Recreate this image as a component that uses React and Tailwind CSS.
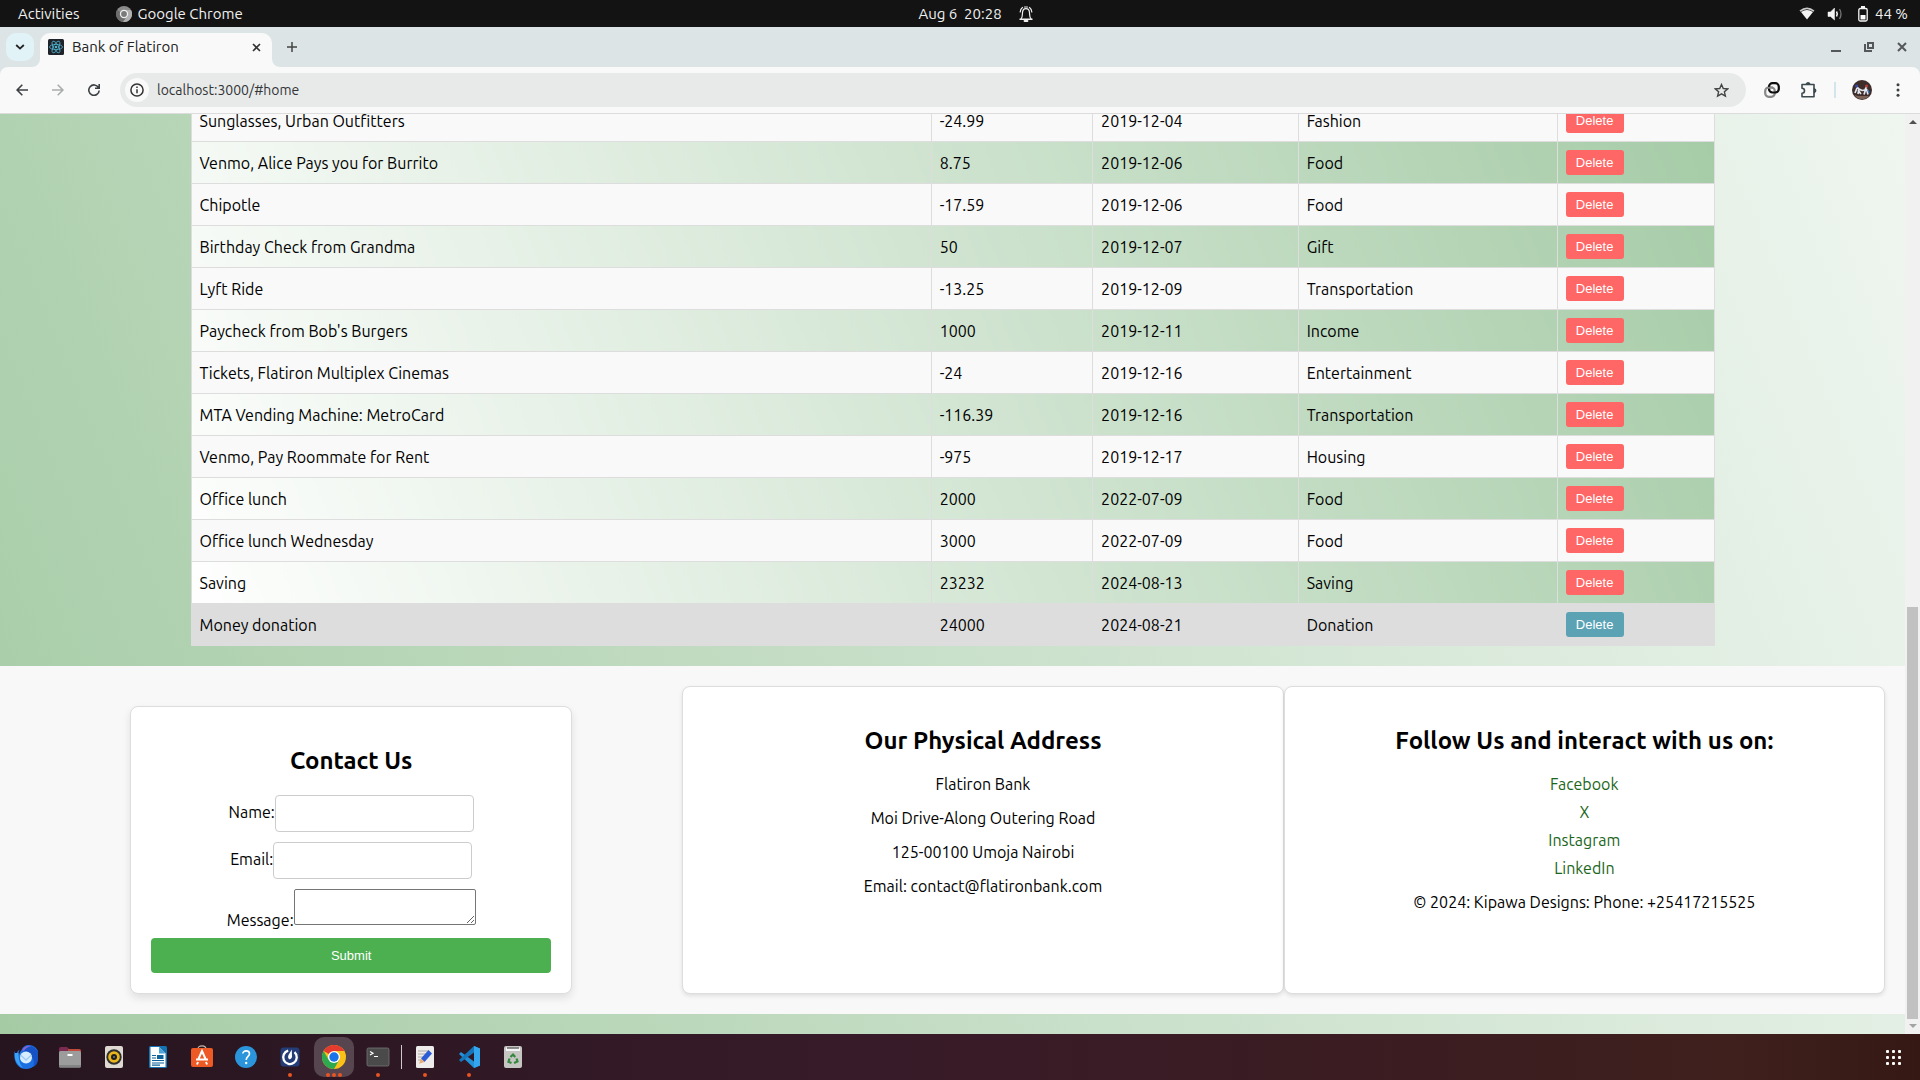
import React from "react";

const transactions = [
  ["Sunglasses, Urban Outfitters", "-24.99", "2019-12-04", "Fashion"],
  ["Venmo, Alice Pays you for Burrito", "8.75", "2019-12-06", "Food"],
  ["Chipotle", "-17.59", "2019-12-06", "Food"],
  ["Birthday Check from Grandma", "50", "2019-12-07", "Gift"],
  ["Lyft Ride", "-13.25", "2019-12-09", "Transportation"],
  ["Paycheck from Bob's Burgers", "1000", "2019-12-11", "Income"],
  ["Tickets, Flatiron Multiplex Cinemas", "-24", "2019-12-16", "Entertainment"],
  ["MTA Vending Machine: MetroCard", "-116.39", "2019-12-16", "Transportation"],
  ["Venmo, Pay Roommate for Rent", "-975", "2019-12-17", "Housing"],
  ["Office lunch", "2000", "2022-07-09", "Food"],
  ["Office lunch Wednesday", "3000", "2022-07-09", "Food"],
  ["Saving", "23232", "2024-08-13", "Saving"],
  ["Money donation", "24000", "2024-08-21", "Donation"],
];

function SystemBar() {
  return (
    <header className="grid h-[27px] shrink-0 grid-cols-3 items-center bg-[#131313] text-[15px] leading-5 text-[#f0f0f0]">
      <div className="flex items-center pl-[18px]">
        <button>Activities</button>
        <button className="ml-9 flex items-center gap-1.5">
          <svg width="16" height="16" viewBox="0 0 16 16">
            <circle cx="8" cy="8" r="8" fill="#8b8b8b" />
            <path d="M8 8 L1.1 4 A8 8 0 0 0 7 15.9 L11 10 Z" fill="#6d6d6d" />
            <path d="M8 4 H15 A8 8 0 0 1 7 15.9 L11.5 10 Z" fill="#b0b0b0" />
            <circle cx="8" cy="8" r="4.2" fill="#f0f0f0" />
            <circle cx="8" cy="8" r="2.9" fill="#7a7a7a" />
          </svg>
          Google Chrome
        </button>
      </div>
      <div className="flex items-center justify-center gap-4 pl-8">
        <button className="whitespace-pre">Aug 6  20:28</button>
        <svg width="16" height="18" viewBox="0 0 16 18" fill="none" stroke="#f0f0f0" strokeWidth="1.2" strokeLinecap="round">
          <path d="M3 14 C4.600 12.500 4.300 10 4.500 7.500 C4.700 5 6 3.600 8 3.600 S11.300 5 11.500 7.500 C11.700 10 11.400 12.500 13 14" />
          <path d="M2 14.300 H14" strokeWidth="1.400" />
          <path d="M6.500 16 H9.500" strokeWidth="1.800" />
          <path d="M4.500 2.500 C3 3.500 2.300 5 2.200 7 M11.500 2.500 C13 3.500 13.700 5 13.800 7" />
          <path d="M6.500 2 H9.500" />
        </svg>
      </div>
      <div className="flex items-center justify-end pr-3">
        <svg width="16" height="14" viewBox="0 0 16 14">
          <path d="M1 4.200 Q8 -1.500 15 4.200" fill="none" stroke="#c8c8c8" strokeWidth="1.600" />
          <path d="M2 5 Q8 1 14 5 L8 12.500 Z" fill="#f4f4f4" />
        </svg>
        <svg className="ml-3" width="16" height="14" viewBox="0 0 16 14" fill="none" stroke="#f4f4f4">
          <path d="M1 5 H3.500 L7.500 1 V13 L3.500 9.500 H1 Z" fill="#f4f4f4" strokeWidth="0.500" />
          <path d="M9.500 4.500 Q11 7 9.500 9.500" strokeWidth="1.500" />
          <path d="M12.500 2 Q15.500 7 12.500 12" stroke="#777" strokeWidth="1.300" />
        </svg>
        <svg className="mr-1.5 ml-3.5" width="12" height="16" viewBox="0 0 12 16">
          <path d="M4 1 H8" stroke="#f4f4f4" strokeWidth="2" />
          <rect x="1.800" y="2.500" width="8.400" height="12.500" rx="1.500" fill="none" stroke="#f4f4f4" strokeWidth="1.300" />
          <path d="M3.500 9 H8.500 V13.500 H3.500 Z" fill="#fff" />
        </svg>
        <span>44 %</span>
      </div>
    </header>
  );
}

function ReactLogo() {
  return (
    <svg width="16" height="16" viewBox="0 0 16 16">
      <rect width="16" height="16" rx="1.500" fill="#20232a" />
      <g fill="none" stroke="#4fb5cf" strokeWidth="0.800">
        <ellipse cx="8" cy="8" rx="6.500" ry="2.600" />
        <ellipse cx="8" cy="8" rx="6.500" ry="2.600" transform="rotate(60 8 8)" />
        <ellipse cx="8" cy="8" rx="6.500" ry="2.600" transform="rotate(120 8 8)" />
      </g>
      <circle cx="8" cy="8" r="1.300" fill="#4fb5cf" />
    </svg>
  );
}

function TabStrip() {
  return (
    <div className="flex h-10 shrink-0 items-end bg-[#dce4e6]">
      <button aria-label="Search tabs" className="mb-1.5 ml-1.5 flex size-7 items-center justify-center rounded-[10px] bg-[#e2f3f8]">
        <svg width="10" height="6" viewBox="0 0 10 6" fill="none" stroke="#222" strokeWidth="1.800">
          <path d="M1.200 1 L5 4.600 L8.800 1" />
        </svg>
      </button>
      <div className="relative ml-1.5 flex h-[34px] w-[232px] items-center rounded-t-[10px] bg-[#f9f9f9] px-2 pb-1.5">
        <svg className="absolute bottom-0 -left-2" width="8" height="8" viewBox="0 0 8 8"><path d="M8 0 V8 H0 A8 8 0 0 0 8 0 Z" fill="#f9f9f9" /></svg>
        <svg className="absolute -right-2 bottom-0" width="8" height="8" viewBox="0 0 8 8"><path d="M0 0 V8 H8 A8 8 0 0 1 0 0 Z" fill="#f9f9f9" /></svg>
        <ReactLogo />
        <span className="ml-2 flex-1 text-[15px] text-[#222]">Bank of Flatiron</span>
        <button aria-label="Close tab" className="flex size-4 items-center justify-center">
          <svg width="9" height="9" viewBox="0 0 9 9" stroke="#333" strokeWidth="1.600"><path d="M1 1 L8 8 M8 1 L1 8" /></svg>
        </button>
      </div>
      <button aria-label="New tab" className="mb-[15px] ml-[15px]">
        <svg width="10" height="10" viewBox="0 0 10 10" stroke="#444" strokeWidth="1.500"><path d="M5 0 V10 M0 5 H10" /></svg>
      </button>
      <div className="ml-auto flex items-center gap-[23px] self-center pr-[13px]">
        <button aria-label="Minimize"><svg width="10" height="10" viewBox="0 0 10 10"><path d="M0 9 H10" stroke="#55585a" strokeWidth="2" /></svg></button>
        <button aria-label="Restore">
          <svg width="10" height="10" viewBox="0 0 10 10" fill="none" stroke="#55585a" strokeWidth="2"><rect x="4" y="1" width="5" height="5" /><path d="M1 2 V9 H8" /></svg>
        </button>
        <button aria-label="Close"><svg width="10" height="10" viewBox="0 0 10 10" stroke="#55585a" strokeWidth="2"><path d="M1 1 L9 9 M9 1 L1 9" /></svg></button>
      </div>
    </div>
  );
}

function Toolbar() {
  return (
    <div className="shrink-0 bg-[#dce4e6]">
      <div className="flex h-[47px] items-center rounded-t-[8px] border-b border-[#dcdcdc] bg-[#f9f9f9] pr-5 pl-4">
        <button aria-label="Back">
          <svg width="12" height="12" viewBox="0 0 12 12" fill="none" stroke="#3c4043" strokeWidth="1.600"><path d="M12 6 H1.200 M6.300 0.800 L1.100 6 L6.300 11.200" /></svg>
        </button>
        <button aria-label="Forward" className="ml-6">
          <svg width="12" height="12" viewBox="0 0 12 12" fill="none" stroke="#aaacad" strokeWidth="1.600"><path d="M0 6 H10.800 M5.700 0.800 L10.900 6 L5.700 11.200" /></svg>
        </button>
        <button aria-label="Reload" className="ml-6">
          <svg width="12" height="12" viewBox="0 0 12 12" fill="none" stroke="#3c4043" strokeWidth="1.600"><path d="M10.500 3.500 A5.200 5.200 0 1 0 11.200 6.500 M11.200 0 V4.200 H7" /></svg>
        </button>
        <div className="ml-5 flex h-[34px] flex-1 items-center rounded-full bg-[#e8eaea] pr-[17px] pl-[5px]">
          <button aria-label="Site information" className="flex size-6 items-center justify-center rounded-full bg-[#f9f9f9]">
            <svg width="14" height="14" viewBox="0 0 14 14" fill="none" stroke="#333" strokeWidth="1.500"><circle cx="7" cy="7" r="6.100" /><path d="M7 6.200 V10.300 M7 3.500 V5" /></svg>
          </button>
          <input aria-label="Address" defaultValue="localhost:3000/#home" className="ml-2 h-6 flex-1 bg-transparent text-[14px] text-[#333537] outline-none" />
          <button aria-label="Bookmark">
            <svg width="15" height="15" viewBox="0 0 15 15" fill="none" stroke="#444" strokeWidth="1.400"><path d="M7.500 1.500 L9.300 5.500 L13.700 5.900 L10.400 8.800 L11.400 13.100 L7.500 10.800 L3.600 13.100 L4.600 8.800 L1.300 5.900 L5.700 5.500 Z" /></svg>
          </button>
        </div>
        <button aria-label="Extension" className="ml-[18px]">
          <svg width="16" height="16" viewBox="0 0 16 16" fill="none" strokeWidth="2.200">
            <rect x="1.200" y="5.500" width="9.600" height="9.300" rx="3.500" stroke="#888" />
            <rect x="5" y="1.200" width="9.800" height="9.300" rx="3.500" stroke="#0d0d0d" />
            <path d="M4 6 Q5 5.500 7 5.500 H9" stroke="#888" />
          </svg>
        </button>
        <button aria-label="Extensions" className="ml-5">
          <svg width="18" height="18" viewBox="0 0 18 18" fill="none" stroke="#3c4a4f" strokeWidth="1.600">
            <path d="M2 3.500 H14 V15.800 H2 V12.300 A2.400 2.400 0 0 0 2 7.300 Z" strokeLinejoin="round" />
            <path d="M6.500 3 A1.700 1.700 0 0 1 9.700 3 Z M14.500 8 A1.700 1.700 0 0 1 14.500 11.200 Z" fill="#3c4a4f" />
          </svg>
        </button>
        <span className="ml-4 h-4 w-0.5 bg-[#d2e5eb]" />
        <button aria-label="Profile" className="ml-4">
          <svg width="20" height="20" viewBox="0 0 20 20">
            <circle cx="10" cy="10" r="10" fill="#3d2c29" />
            <path d="M2.500 15 A9 9 0 0 0 17 16 L14 16 H6 Z" fill="#7d6257" />
            <path d="M5 7 L7 9 L6 14 M7 9 L10 10.500 M5 8 L3 13 M14.500 7 L13 10 L10 10.500 M13.500 10 L12 14.500 M14.500 9 L16 14.500 M6 10 L9 14" stroke="#e4e6ef" strokeWidth="1.700" fill="none" />
            <circle cx="4.500" cy="6" r="1.600" fill="#344aa8" /><circle cx="14.500" cy="6" r="1.500" fill="#b34040" />
            <path d="M16 10 L17 13" stroke="#3477bc" strokeWidth="1.500" />
          </svg>
        </button>
        <button aria-label="Menu" className="ml-6">
          <svg width="4" height="14" viewBox="0 0 4 14" fill="#3c4043"><circle cx="2" cy="1.700" r="1.500" /><circle cx="2" cy="7" r="1.500" /><circle cx="2" cy="12.300" r="1.500" /></svg>
        </button>
      </div>
    </div>
  );
}

function TransactionTable() {
  return (
    <table className="mx-auto mb-5 w-4/5 shrink-0 table-fixed border-collapse bg-[linear-gradient(68deg,#ffffff,#a5cba6)] text-base text-black">
      <colgroup>
        <col className="w-[48.6%]" />
        <col className="w-[10.6%]" />
        <col className="w-[13.5%]" />
        <col className="w-[17%]" />
        <col className="w-[10.3%]" />
      </colgroup>
      <tbody>
        {transactions.map((row, i) => {
          const last = i === transactions.length - 1;
          return (
            <tr key={row[0]} className={last ? "bg-[#dddddd]" : i % 2 === 0 ? "bg-[#f9f9f9]" : ""}>
              {row.map((cell, j) => (
                <td key={j} className="h-[42px] border border-[#dddddd] px-2">{cell}</td>
              ))}
              <td className="h-[42px] border border-[#dddddd] px-2">
                <button
                  aria-label={"Delete " + row[0]}
                  className={
                    "block h-[25px] w-[58px] rounded-[3px] font-['Liberation_Sans',sans-serif] text-[13px] text-white " +
                    (last ? "bg-[#5ba2b5]" : "bg-[#ff6666]")
                  }
                >
                  Delete
                </button>
              </td>
            </tr>
          );
        })}
      </tbody>
    </table>
  );
}

function ContactCard() {
  return (
    <form className="mx-auto mt-5 w-full max-w-[442px] rounded-[8px] border border-[#dddddd] bg-white px-5 pt-10 pb-5 shadow-[0_4px_8px_rgba(0,0,0,0.1)]">
      <h2 className="text-center text-2xl leading-7 font-bold">Contact Us</h2>
      <div className="mt-5 flex items-center justify-center">
        <label htmlFor="name" className="pb-1">Name:</label>
        <input id="name" className="h-[37px] w-[199px] rounded-[4px] border border-[#cccccc] px-2" />
      </div>
      <div className="mt-2.5 flex items-center justify-center">
        <label htmlFor="email" className="pb-1">Email:</label>
        <input id="email" type="email" className="h-[37px] w-[199px] rounded-[4px] border border-[#cccccc] px-2" />
      </div>
      <div className="mt-2.5 flex items-end justify-center">
        <label htmlFor="message" className="-mb-1">Message:</label>
        <textarea id="message" className="block h-9 w-[182px] rounded-[2px] border border-[#767676]" />
      </div>
      <button type="button" className="mt-[13px] block h-[35px] w-full rounded-[4px] bg-[#4caf50] font-['Liberation_Sans',sans-serif] text-[13px] text-white">
        Submit
      </button>
    </form>
  );
}

function Footer() {
  const card = "rounded-[8px] border border-[#dddddd] bg-white px-5 pt-10 text-center shadow-[0_2px_4px_rgba(0,0,0,0.1)]";
  return (
    <footer className="mb-5 grid shrink-0 grid-cols-[662fr_601fr_601fr] bg-[#f8f8f8] p-5 text-base leading-[18px] text-black">
      <ContactCard />
      <section className={card}>
        <h2 className="text-2xl leading-7 font-bold">Our Physical Address</h2>
        <div className="mt-5 flex flex-col gap-4">
          <p>Flatiron Bank</p>
          <p>Moi Drive-Along Outering Road</p>
          <p>125-00100 Umoja Nairobi</p>
          <p>Email: contact@flatironbank.com</p>
        </div>
      </section>
      <section className={card}>
        <h2 className="text-2xl leading-7 font-bold">Follow Us and interact with us on:</h2>
        <ul className="mt-5 flex flex-col gap-2.5 text-[#1b661b]">
          <li><a href="#facebook">Facebook</a></li>
          <li><a href="#x">X</a></li>
          <li><a href="#instagram">Instagram</a></li>
          <li><a href="#linkedin">LinkedIn</a></li>
        </ul>
        <p className="mt-4">© 2024: Kipawa Designs: Phone: +25417215525</p>
      </section>
    </footer>
  );
}

function ScrollBar() {
  return (
    <div className="flex w-[15px] shrink-0 flex-col items-center bg-[#f1f1f1] py-1.5">
      <svg width="8" height="4" viewBox="0 0 8 4"><path d="M0 4 L4 0 L8 4 Z" fill="#505050" /></svg>
      <div className="flex-[484]" />
      <div className="w-[11px] flex-[412] bg-[#c1c1c1]" />
      <svg className="mt-[5px]" width="8" height="4" viewBox="0 0 8 4"><path d="M0 0 L4 4 L8 0 Z" fill="#a3a3a3" /></svg>
    </div>
  );
}

const dockIcons = {
  Thunderbird: (
    <>
      <path d="M0.500 6 C-1 15 3 24 12 24 C21 24 25 17 23.800 8 C24 4 20.500 0 15 0 C11 0 8.500 2 7.500 5 C6 7 5 9 4.500 11.500 C4.200 9 5 6.500 5.500 4.500 C3.500 6 2.500 8 2.300 10 C1.500 9 1 7.500 0.500 6 Z" fill="#1b6fe0" />
      <path d="M9 6 C10 1 19 -1 22 5 L24 5 C25 14 24 20 19 22 C22 16 18 8 9 6 Z" fill="#1752c4" />
      <path d="M1 8 C0 15 3 20 9 23 C4 17 5 12 4.500 8 Z" fill="#3aa3f5" />
      <path d="M8 5 C10 1 14 0 17 1 C13 2 11 4 10 6 Z" fill="#8264d8" />
      <circle cx="12" cy="12.500" r="6" fill="#d8edff" />
      <path d="M6.500 10 L12 15 L17.500 10" stroke="#9fcdf5" strokeWidth="1.500" fill="none" />
    </>
  ),
  Files: (
    <>
      <path d="M1 4 Q1 2 3 2 H9 L11 4 H21 Q23 4 23 6 V10 H1 Z" fill="#7b2a51" />
      <path d="M10 4 H21 Q23 4 23 6 V8 H10 Z" fill="#c04b3c" />
      <rect x="1" y="6" width="22" height="16.500" rx="1.500" fill="#9c9c9c" />
      <path d="M1 20 H23 V21 Q23 22.500 21.500 22.500 H2.500 Q1 22.500 1 21 Z" fill="#838383" />
      <path d="M9.500 9 H14.500 V11 H9.500 Z" fill="#fff" />
    </>
  ),
  Rhythmbox: (
    <>
      <rect x="3" y="1" width="18" height="22" rx="2" fill="#dedad2" />
      <circle cx="12" cy="12" r="7.700" fill="#2e2e2e" />
      <circle cx="12" cy="12" r="5.800" fill="#eab51c" />
      <circle cx="12" cy="12" r="3" fill="#1f1f1f" />
      <circle cx="12" cy="12" r="1" fill="#777" />
    </>
  ),
  Writer: (
    <>
      <rect x="3" y="1" width="18" height="22" rx="1.500" fill="#1673b1" />
      <path d="M4.500 2 H13 L19.500 8.500 V22 H4.500 Z" fill="#fff" />
      <path d="M13 2 L19.500 8.500 H13 Z" fill="#4ca4d8" />
      <path d="M6 10.500 H10 M6 13 H10 M6 15.500 H18 M6 18 H18 M6 20.200 H14" stroke="#0c639c" strokeWidth="1.200" />
      <rect x="11" y="10" width="6.500" height="4" fill="#0c639c" />
    </>
  ),
  Software: (
    <>
      <path d="M8 4 Q8 0.800 12 0.800 T16 4" stroke="#c8b6a6" strokeWidth="1.200" fill="none" />
      <rect x="1" y="3" width="22" height="19" rx="2" fill="#ee5a25" />
      <path d="M8 15 L12 6 L16 15 M6 14.500 H18 M8 17 L7 19.500 M16 17 L17 19.500" stroke="#fff" strokeWidth="2" fill="none" />
    </>
  ),
  Help: (
    <>
      <circle cx="12" cy="12" r="11" fill="#2b95dc" />
      <path d="M8.800 8.500 C8.800 5 15.500 5 15.500 8.800 C15.500 11.500 12.200 11.500 12.200 15" stroke="#fff" strokeWidth="1.600" fill="none" />
      <circle cx="12.200" cy="18" r="1.200" fill="#fff" />
    </>
  ),
  Mattermost: (
    <>
      <rect x="2.500" y="2.500" width="19" height="19" rx="3" fill="#243d78" />
      <path d="M10.200 5.700 A6.800 6.800 0 1 0 16.500 7.200" stroke="#fff" strokeWidth="2.300" fill="none" />
      <path d="M13.800 4.500 L14 12 Q13 14.800 10.800 14 Q9.200 12.500 10.500 10 Z" fill="#fff" />
    </>
  ),
  Chrome: (
    <>
      <circle cx="12" cy="12" r="12" fill="#fbc116" />
      <path d="M12 12 L1.600 6 A12 12 0 0 1 22.400 6 H12 Z" fill="#e33b2e" />
      <path d="M1.600 6 A12 12 0 0 0 12 24 L17.200 15 L6.800 15 Z" fill="#2da94f" />
      <circle cx="12" cy="12" r="6" fill="#fff" />
      <circle cx="12" cy="12" r="4.700" fill="#1a73e8" />
    </>
  ),
  Terminal: (
    <>
      <rect x="1" y="3" width="22" height="18" rx="1.500" fill="#4a4a4a" stroke="#777" strokeWidth="0.800" />
      <path d="M4 6.500 L7 8.300 L4 10 M8 11.500 H12" stroke="#fff" strokeWidth="1.200" fill="none" />
    </>
  ),
  Editor: (
    <>
      <rect x="3" y="1" width="18" height="22" rx="1.500" fill="#efedec" />
      <path d="M5 6 H16 M5 9 H13 M5 12 H11 M5 15 H9" stroke="#b3aaa2" strokeWidth="1" />
      <path d="M15.500 5 L19 8.500 L11.500 17 L8 13.500 Z" fill="#2d5dd6" />
      <path d="M8 13.500 L11.500 17 L6 18.800 Z" fill="#e9ad72" />
    </>
  ),
  Code: (
    <>
      <path d="M17 1 L23 3.500 V20.500 L17 23 L2 9 L4 7 L17 16.500 Z" fill="#2291d8" />
      <path d="M17 1 L2 15 L4 17 L17 7.500 Z" fill="#1576bb" />
      <path d="M17 1 L23 3.500 V20.500 L17 23 Z" fill="#33a6ee" />
    </>
  ),
  Trash: (
    <>
      <rect x="3" y="1" width="18" height="22" rx="2" fill="#c5c5c2" />
      <path d="M5 2.500 H19 V6 H5 Z" fill="#f5f5f5" />
      <path d="M6 3 H18" stroke="#555" strokeWidth="1.300" />
      <path d="M9.500 12 L12 9.500 L14.200 12 M15.500 13.500 L16.500 16.500 L13 18 M10.500 18 L7.500 16.800 L8.500 13.500" stroke="#32883c" strokeWidth="2.200" fill="none" />
    </>
  ),
};

function DockButton({ name, dots = 0, active = false }) {
  return (
    <button aria-label={name} className="relative flex h-[46px] w-11 items-center justify-center">
      <span className={"flex size-10 items-center justify-center rounded-[10px] " + (active ? "bg-white/20" : "")}>
        <svg width="24" height="24" viewBox="0 0 24 24">{dockIcons[name]}</svg>
      </span>
      <span className="absolute inset-x-0 bottom-[3px] flex justify-center gap-0.5">
        {Array.from({ length: dots }, (_, i) => (
          <span key={i} className="size-1 rounded-full bg-[#e95420]" />
        ))}
      </span>
    </button>
  );
}

function Dock() {
  return (
    <nav className="flex h-[46px] shrink-0 items-center bg-[linear-gradient(90deg,#26151f,#371b28_45%,#3a1c22_70%,#3f201d_90%,#351814)] pl-1">
      <DockButton name="Thunderbird" />
      <DockButton name="Files" />
      <DockButton name="Rhythmbox" />
      <DockButton name="Writer" />
      <DockButton name="Software" />
      <DockButton name="Help" />
      <DockButton name="Mattermost" dots={1} />
      <DockButton name="Chrome" dots={3} active />
      <DockButton name="Terminal" dots={1} />
      <span className="mx-px h-6 w-px bg-[#d0c8cc]" />
      <DockButton name="Editor" dots={1} />
      <DockButton name="Code" dots={1} />
      <DockButton name="Trash" />
      <button aria-label="Show applications" className="mr-[19px] ml-auto grid grid-cols-3 gap-[3px]">
        {Array.from({ length: 9 }, (_, i) => (
          <span key={i} className="size-[3px] rounded-[1px] bg-white" />
        ))}
      </button>
    </nav>
  );
}

export default function App() {
  return (
    <div className="flex h-screen flex-col overflow-hidden font-['Ubuntu','Noto_Sans',sans-serif]">
      <SystemBar />
      <TabStrip />
      <Toolbar />
      <div className="flex min-h-0 flex-1">
        <main className="flex min-w-0 flex-1 flex-col justify-end overflow-hidden bg-[linear-gradient(68deg,#a5cba5,#eff6f0)]">
          <TransactionTable />
          <Footer />
        </main>
        <ScrollBar />
      </div>
      <Dock />
    </div>
  );
}
